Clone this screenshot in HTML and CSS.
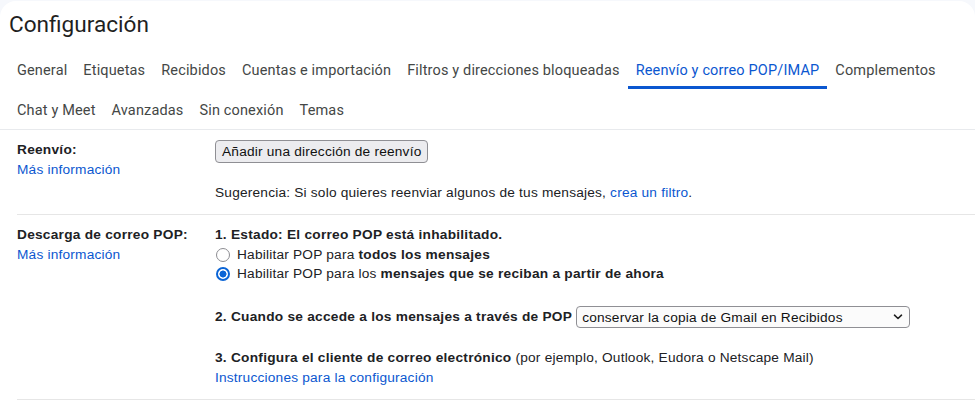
FILE: index.html
```html
<!DOCTYPE html>
<html lang="es">
<head>
<meta charset="utf-8">
<title>Configuración</title>
<link rel="stylesheet" href="styles.css">
</head>
<body>
<div class="panel">
  <h1 class="title">Configuración</h1>
  <nav class="tabs">
    <a class="tab">General</a>
    <a class="tab">Etiquetas</a>
    <a class="tab">Recibidos</a>
    <a class="tab">Cuentas e importación</a>
    <a class="tab">Filtros y direcciones bloqueadas</a>
    <a class="tab active">Reenvío y correo POP/IMAP</a>
    <a class="tab">Complementos</a>
    <a class="tab">Chat y Meet</a>
    <a class="tab">Avanzadas</a>
    <a class="tab">Sin conexión</a>
    <a class="tab">Temas</a>
  </nav>
  <div class="content">
    <section class="row">
      <div class="label">
        <div class="label-title">Reenvío:</div>
        <a class="link">Más información</a>
      </div>
      <div class="value">
        <button class="btn">Añadir una dirección de reenvío</button>
        <p class="hint">Sugerencia: Si solo quieres reenviar algunos de tus mensajes, <a class="link">crea un filtro</a>.</p>
      </div>
    </section>
    <section class="row">
      <div class="label">
        <div class="label-title">Descarga de correo POP:</div>
        <a class="link">Más información</a>
      </div>
      <div class="value">
        <div class="strong-line">1. Estado: El correo POP está inhabilitado.</div>
        <label class="radio-row"><input type="radio" name="pop" class="radio"><span>Habilitar POP para <b>todos los mensajes</b></span></label>
        <label class="radio-row"><input type="radio" name="pop" class="radio" checked><span>Habilitar POP para los <b>mensajes que se reciban a partir de ahora</b></span></label>
        <div class="step2">
          <b>2. Cuando se accede a los mensajes a través de POP</b>
          <select class="select">
            <option>conservar la copia de Gmail en Recibidos</option>
          </select>
        </div>
        <div class="step3"><b>3. Configura el cliente de correo electrónico</b> (por ejemplo, Outlook, Eudora o Netscape Mail)</div>
        <a class="link">Instrucciones para la configuración</a>
      </div>
    </section>
  </div>
</div>
</body>
</html>
```

FILE: styles.css
```css
html, body {
  margin: 0;
  padding: 0;
  background: #f6f8fc;
}
.panel {
  margin-top: 1px;
  background: #ffffff;
  border-radius: 16px 16px 0 0;
  min-height: 400px;
}
.title {
  margin: 0;
  height: 48px;
  box-sizing: border-box;
  padding: 10px 0 0 9px;
  font-family: Roboto, "Noto Sans", sans-serif;
  font-weight: 400;
  font-size: 22.6px;
  line-height: 28px;
  color: #1f1f1f;
}
.tabs {
  display: flex;
  flex-wrap: wrap;
  padding-left: 9px;
  border-bottom: 1px solid #e8eaed;
}
.tab {
  box-sizing: border-box;
  height: 40px;
  display: flex;
  align-items: center;
  padding: 5px 8px 0;
  border-bottom: 3px solid transparent;
  font-family: Roboto, "Noto Sans", sans-serif;
  font-size: 14.5px;
  letter-spacing: 0.15px;
  color: #444746;
  white-space: nowrap;
}
.tab.active {
  color: #0b57d0;
  border-bottom-color: #0b57d0;
}
.content {
  font-family: "Liberation Sans", Arial, sans-serif;
  font-size: 13.7px;
  letter-spacing: 0.2px;
  color: #202124;
}
.content b,
.label-title,
.strong-line {
  font-weight: bold;
  letter-spacing: 0.25px;
}
.row {
  display: flex;
  margin-left: 17px;
  padding: 10px 0 11px;
  border-bottom: 1px solid #e6e6e6;
  line-height: 20px;
}
.label {
  width: 198px;
  flex: none;
  display: flex;
  flex-direction: column;
  align-items: flex-start;
}
.link {
  color: #0b57d0;
  text-decoration: none;
}
.value {
  display: flex;
  flex-direction: column;
  align-items: flex-start;
}
.btn {
  height: 23px;
  box-sizing: border-box;
  padding: 0 6px;
  margin: 0;
  font-family: "Liberation Sans", Arial, sans-serif;
  font-size: 13.7px;
  letter-spacing: 0.2px;
  color: #111;
  background: #ececef;
  border: 1px solid #8f8f94;
  border-radius: 4px;
}
.hint {
  margin: 20px 0 0;
}
.radio-row {
  display: flex;
  align-items: center;
  height: 19px;
}
.radio {
  -webkit-appearance: none;
  appearance: none;
  box-sizing: border-box;
  width: 14px;
  height: 14px;
  margin: 0 7px 0 1px;
  border: 1.5px solid #8d8d92;
  border-radius: 50%;
  background: #fff;
}
.radio:checked {
  border: 2px solid #0a64d6;
  background: radial-gradient(circle, #0a64d6 0 3.2px, #fff 3.8px);
}
.step2 {
  margin-top: 23px;
  display: flex;
  align-items: center;
  gap: 4px;
}
.select {
  -webkit-appearance: none;
  appearance: none;
  width: 334px;
  height: 22px;
  box-sizing: border-box;
  padding: 0 20px 0 5px;
  margin: 0;
  font-family: "Liberation Sans", Arial, sans-serif;
  font-size: 13.7px;
  letter-spacing: 0.2px;
  color: #111;
  border: 1px solid #8f8f94;
  border-radius: 4px;
  background: #fbfbfb url("data:image/svg+xml;utf8,<svg xmlns='http://www.w3.org/2000/svg' width='10' height='6' viewBox='0 0 10 6'><path d='M1.5 1.2 L5 4.5 L8.5 1.2' fill='none' stroke='%23222' stroke-width='1.6' stroke-linecap='round' stroke-linejoin='round'/></svg>") no-repeat right 6px center;
}
.step3 {
  margin-top: 20px;
}
```
